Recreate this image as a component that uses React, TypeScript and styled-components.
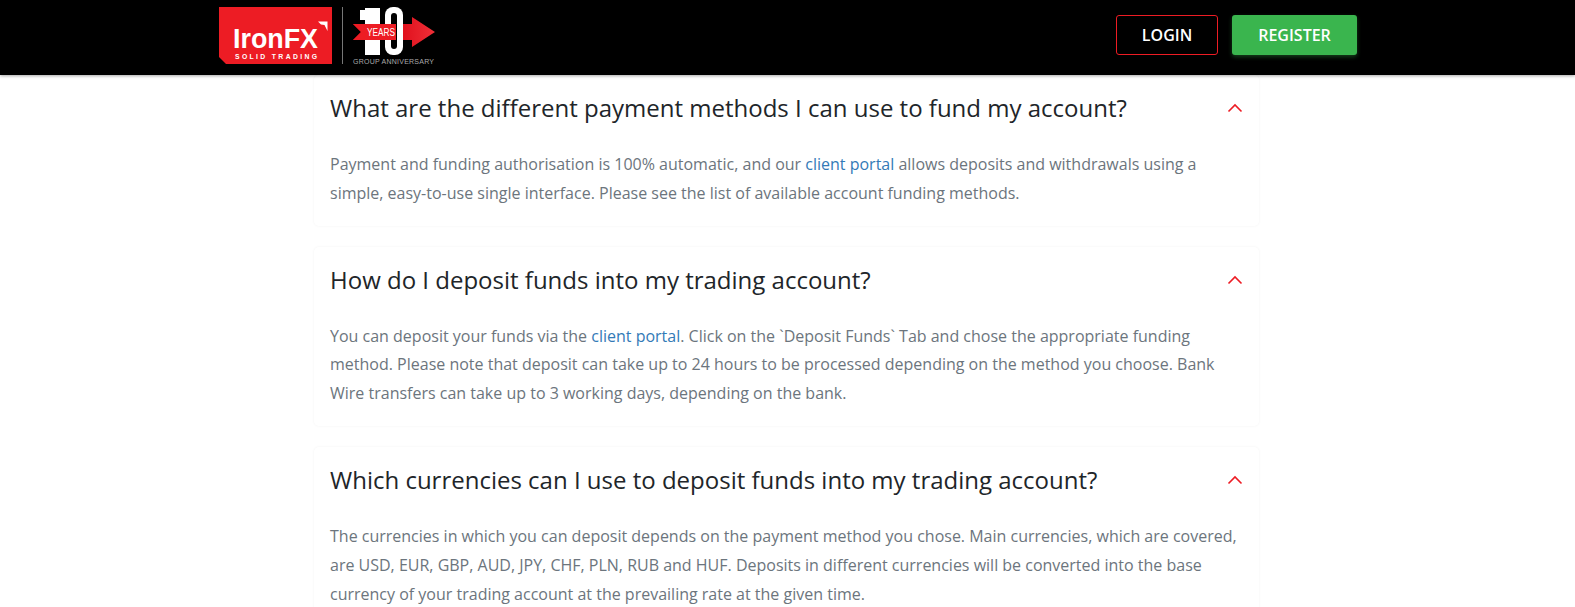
import React from "react";
import styled, { createGlobalStyle } from "styled-components";

const GlobalStyle = createGlobalStyle`
  html, body {
    margin: 0;
    padding: 0;
    background: #fff;
    overflow: hidden;
  }
`;

const Page = styled.div`
  height: 607px;
  overflow: hidden;
  font-family: "Open Sans", sans-serif;
`;

const Header = styled.header`
  position: relative;
  z-index: 2;
  height: 75px;
  box-sizing: border-box;
  padding: 0 218px 0 219px;
  background: #000;
  box-shadow: 0 1px 3px rgba(0, 0, 0, 0.35);
  display: flex;
  align-items: center;
  justify-content: space-between;
`;

const LogoSlot = styled.div`
  display: flex;
  align-items: flex-start;
  height: 75px;
`;

const Actions = styled.div`
  display: flex;
  gap: 14px;
  margin-top: -5px;
`;

const LoginButton = styled.button`
  width: 102px;
  height: 40px;
  box-sizing: border-box;
  border: 1px solid #ed1c24;
  border-radius: 3px;
  background: transparent;
  color: #fff;
  font: 600 16px "Open Sans", sans-serif;
  padding: 0;
`;

const RegisterButton = styled.button`
  width: 125px;
  height: 40px;
  border: 0;
  border-radius: 3px;
  background: #3ab54e;
  box-shadow: 0 2px 4px rgba(58, 181, 78, 0.35);
  color: #fff;
  font: 600 16px "Open Sans", sans-serif;
  padding: 0;
`;

const FaqList = styled.main`
  width: 945px;
  margin-left: 314px;
  display: flex;
  flex-direction: column;
  gap: 21px;
`;

const FaqCard = styled.section`
  box-sizing: border-box;
  padding: 13px 16px 18px;
  background: #fff;
  border-radius: 5px;
  box-shadow: 0 0 3px rgba(0, 0, 0, 0.05);
`;

const QuestionRow = styled.div`
  display: flex;
  align-items: center;
  justify-content: space-between;
  height: 40px;
  margin-bottom: 22px;
`;

const Question = styled.h3`
  margin: 0;
  color: #212529;
  font-size: 24px;
  font-weight: 400;
  line-height: 36px;
`;

const Chevron = styled.svg`
  flex: none;
`;

const Answer = styled.p`
  margin: 0;
  color: #6c757d;
  font-size: 16px;
  line-height: 28.8px;
`;

const AnswerLink = styled.a`
  color: #337ab7;
  text-decoration: none;
`;

const faqs = [
  {
    question: "What are the different payment methods I can use to fund my account?",
    answer: (
      <>
        Payment and funding authorisation is 100% automatic, and our <AnswerLink href="#">client portal</AnswerLink>{" "}
        allows deposits and withdrawals using a simple, easy-to-use single interface. Please see the list of available
        account funding methods.
      </>
    ),
  },
  {
    question: "How do I deposit funds into my trading account?",
    answer: (
      <>
        You can deposit your funds via the <AnswerLink href="#">client portal</AnswerLink>. Click on the `Deposit Funds`
        Tab and chose the appropriate funding method. Please note that deposit can take up to 24 hours to be processed
        depending on the method you choose. Bank Wire transfers can take up to 3 working days, depending on the bank.
      </>
    ),
  },
  {
    question: "Which currencies can I use to deposit funds into my trading account?",
    answer: (
      <>
        The currencies in which you can deposit depends on the payment method you chose. Main currencies, which are
        covered, are USD, EUR, GBP, AUD, JPY, CHF, PLN, RUB and HUF. Deposits in different currencies will be converted
        into the base currency of your trading account at the prevailing rate at the given time.
      </>
    ),
  },
];

function Logo() {
  return (
    <svg width="220" height="70" viewBox="0 0 220 70">
      <defs>
        <linearGradient id="arrow" x1="0" x2="1" y1="0" y2="0">
          <stop offset="0" stopColor="#d8000f" />
          <stop offset="0.4" stopColor="#d8000f" />
          <stop offset="1" stopColor="#f03038" />
        </linearGradient>
      </defs>
      <path d="M0 7H113V64H7L0 57Z" fill="#ed1c24" />
      <path d="M99 21.5H108.5V31L105.5 25L102 24.5Z" fill="#fff" />
      <text x="14" y="48" fill="#fff" fontFamily="Liberation Sans" fontSize="27" fontWeight="700" textLength="85" lengthAdjust="spacingAndGlyphs">
        IronFX
      </text>
      <text x="16" y="59" fill="#fff" fontFamily="Liberation Sans" fontSize="6.8" fontWeight="700" textLength="82">
        SOLID TRADING
      </text>
      <rect x="123" y="7" width="1" height="57" fill="#777" />
      <path d="M134 24H193V17L216 32L193 47V40H134L142 32Z" fill="url(#arrow)" />
      <rect x="166" y="7" width="18" height="48" rx="8" fill="#fff" />
      <rect x="172" y="13" width="6" height="36" rx="3" fill="#000" />
      <path d="M146 8H161V55H146V20H141V10H146Z" fill="#fff" />
      <path d="M134 24H177V40H134L142 32Z" fill="#ed1c24" />
      <text x="162" y="36" fill="#fff" fontFamily="Liberation Sans" fontSize="10" textAnchor="middle" textLength="28" lengthAdjust="spacingAndGlyphs">
        YEARS
      </text>
      <text x="134" y="64" fill="#aaa" fontFamily="Liberation Sans" fontSize="7" textLength="81">
        GROUP ANNIVERSARY
      </text>
    </svg>
  );
}

export default function App() {
  return (
    <Page>
      <GlobalStyle />
      <Header>
        <LogoSlot>
          <Logo />
        </LogoSlot>
        <Actions>
          <LoginButton>LOGIN</LoginButton>
          <RegisterButton>REGISTER</RegisterButton>
        </Actions>
      </Header>
      <FaqList>
        {faqs.map((faq) => (
          <FaqCard key={faq.question}>
            <QuestionRow>
              <Question>{faq.question}</Question>
              <Chevron width="16" height="10" viewBox="0 0 16 10">
                <path d="M1.5 8.5L8 2L14.5 8.5" fill="none" stroke="#ed1c24" strokeWidth="1.6" />
              </Chevron>
            </QuestionRow>
            <Answer>{faq.answer}</Answer>
          </FaqCard>
        ))}
      </FaqList>
    </Page>
  );
}
